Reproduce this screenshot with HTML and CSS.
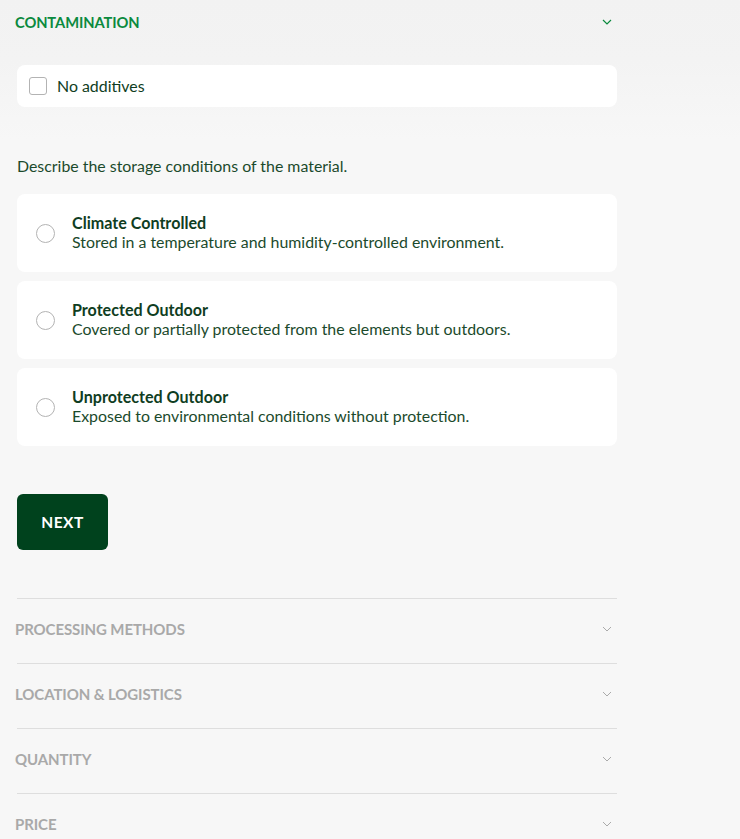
FILE: index.html
```html
<!DOCTYPE html>
<html>
<head>
<meta charset="utf-8">
<link rel="stylesheet" href="styles.css">
</head>
<body>
<div class="page">
  <div class="column">
    <div class="section-head active">
      <span class="section-title">CONTAMINATION</span>
      <svg class="chev" width="10" height="6" viewBox="0 0 10 6"><path d="M1 1 L5 5 L9 1" fill="none" stroke="currentColor" stroke-width="1.2"/></svg>
    </div>
    <div class="check-card">
      <span class="checkbox"></span>
      <span class="check-label">No additives</span>
    </div>
    <p class="question">Describe the storage conditions of the material.</p>
    <div class="options">
      <div class="option">
        <span class="radio"></span>
        <div class="option-text">
          <div class="option-title">Climate Controlled</div>
          <div class="option-desc">Stored in a temperature and humidity-controlled environment.</div>
        </div>
      </div>
      <div class="option">
        <span class="radio"></span>
        <div class="option-text">
          <div class="option-title">Protected Outdoor</div>
          <div class="option-desc">Covered or partially protected from the elements but outdoors.</div>
        </div>
      </div>
      <div class="option">
        <span class="radio"></span>
        <div class="option-text">
          <div class="option-title">Unprotected Outdoor</div>
          <div class="option-desc">Exposed to environmental conditions without protection.</div>
        </div>
      </div>
    </div>
    <button class="next">NEXT</button>
    <div class="collapsed">
      <div class="section-row">
        <span class="section-title">PROCESSING METHODS</span>
        <svg class="chev" width="10" height="6" viewBox="0 0 10 6"><path d="M1 1 L5 5 L9 1" fill="none" stroke="currentColor" stroke-width="1"/></svg>
      </div>
      <div class="section-row">
        <span class="section-title">LOCATION &amp; LOGISTICS</span>
        <svg class="chev" width="10" height="6" viewBox="0 0 10 6"><path d="M1 1 L5 5 L9 1" fill="none" stroke="currentColor" stroke-width="1"/></svg>
      </div>
      <div class="section-row">
        <span class="section-title">QUANTITY</span>
        <svg class="chev" width="10" height="6" viewBox="0 0 10 6"><path d="M1 1 L5 5 L9 1" fill="none" stroke="currentColor" stroke-width="1"/></svg>
      </div>
      <div class="section-row">
        <span class="section-title">PRICE</span>
        <svg class="chev" width="10" height="6" viewBox="0 0 10 6"><path d="M1 1 L5 5 L9 1" fill="none" stroke="currentColor" stroke-width="1"/></svg>
      </div>
    </div>
  </div>
</div>
</body>
</html>
```
FILE: styles.css
```css
html, body {
  margin: 0;
  padding: 0;
}
body {
  background: linear-gradient(#f2f2f2 0px, #f3f3f3 60px, #f7f7f7 140px) no-repeat, #f7f7f7;
  font-family: Lato, "Open Sans", sans-serif;
  color: #0f3d22;
  height: 839px;
  overflow: hidden;
}
.page {
  padding-left: 16px;
}
.column {
  width: 601px;
  display: flex;
  flex-direction: column;
}
.section-head {
  height: 43px;
  display: flex;
  align-items: center;
  justify-content: space-between;
  padding-right: 5px;
  margin-left: -1px;
}
.section-title {
  font-weight: 700;
  font-size: 14.7px;
  letter-spacing: -0.1px;
}
.active .section-title { color: #0b8a3e; }
.active .chev { color: #0b8a3e; }
.check-card {
  margin-top: 22px;
  margin-left: 1px;
  height: 42px;
  background: #fff;
  border-radius: 8px;
  display: flex;
  align-items: center;
  padding-left: 12px;
  gap: 10px;
}
.checkbox {
  width: 16px;
  height: 16px;
  border: 1px solid #b3b3b3;
  border-radius: 3px;
  box-sizing: content-box;
}
.check-label {
  font-size: 15.9px;
  margin-top: -1px;
}
.question {
  margin: 49px 0 0 1px;
  font-size: 15.9px;
  line-height: 20px;
  color: #1b4a2c;
}
.options {
  margin-top: 18px;
  margin-left: 1px;
  display: flex;
  flex-direction: column;
  gap: 9px;
}
.option {
  height: 78px;
  background: #fff;
  border-radius: 8px;
  display: flex;
  align-items: center;
  padding-left: 19px;
  gap: 17px;
}
.radio {
  width: 17px;
  height: 17px;
  border: 1px solid #b3b3b3;
  border-radius: 50%;
  flex: none;
}
.option-text {
  margin-top: -2px;
}
.option-title {
  font-weight: 700;
  font-size: 16.1px;
  line-height: 19px;
}
.option-desc {
  font-size: 15.9px;
  line-height: 20px;
  color: #1b4a2c;
}
.next {
  margin-top: 48px;
  margin-left: 1px;
  width: 91px;
  height: 56px;
  background: #00421d;
  color: #fff;
  border: none;
  border-radius: 6px;
  font-family: Lato, "Open Sans", sans-serif;
  font-weight: 700;
  font-size: 15.5px;
  letter-spacing: 0.5px;
  align-self: flex-start;
}
.collapsed {
  margin-top: 48px;
  margin-left: 1px;
}
.section-row {
  height: 64px;
  border-top: 1px solid #dedede;
  display: flex;
  align-items: center;
  justify-content: space-between;
  padding-right: 5px;
}
.section-row .section-title {
  color: #a9a9a9;
  margin-left: -2px;
  margin-top: -4px;
  font-size: 15px;
}
.section-row .chev {
  color: #aaaaaa;
  margin-top: -4px;
}
```
